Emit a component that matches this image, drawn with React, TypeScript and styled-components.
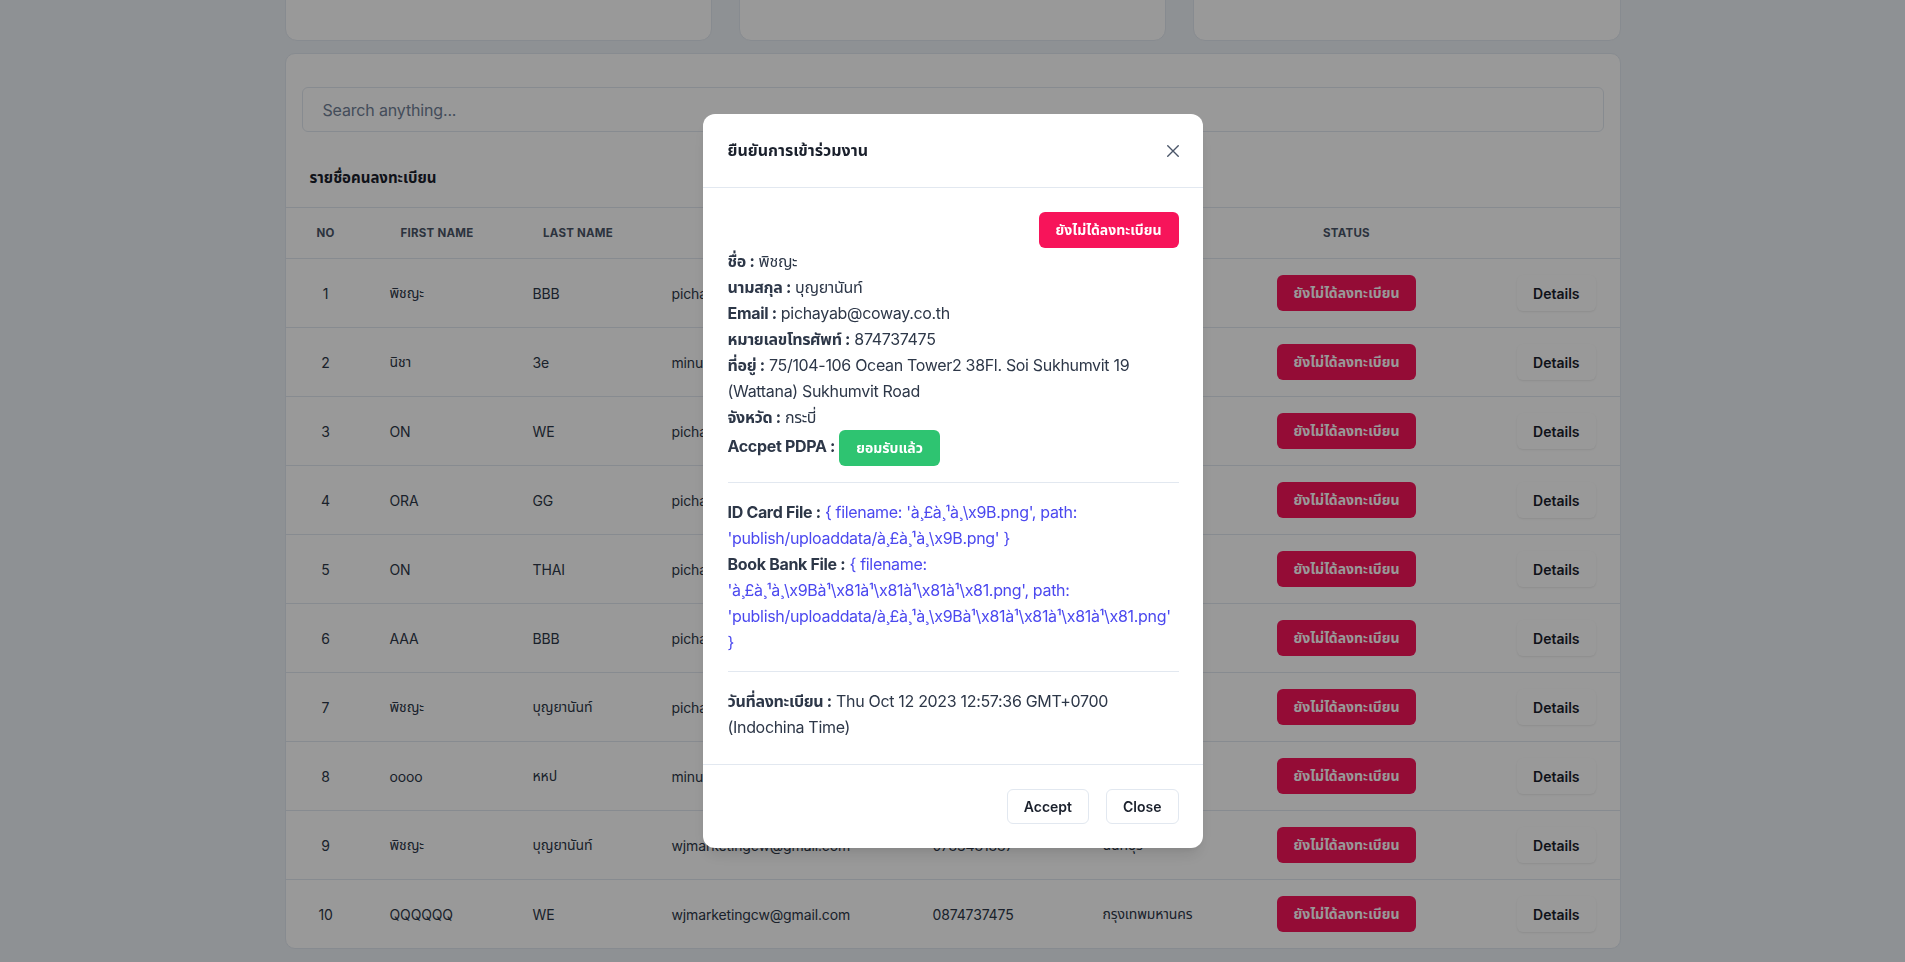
import React from 'react';
import styled, { createGlobalStyle } from 'styled-components';

const GlobalStyle = createGlobalStyle`
  * { box-sizing: border-box; }
  html, body {
    margin: 0;
    padding: 0;
    overflow: hidden;
  }
  body {
    background: #edf2f7;
    font-family: Inter, "Noto Sans", "Noto Sans Thai", "Tlwg Typo", "Loma", sans-serif;
    color: #2d3748;
  }
`;

const Page = styled.div`
  max-width: 1336px;
  margin: 0 auto;
`;

const Stats = styled.div`
  display: grid;
  grid-template-columns: repeat(3, 1fr);
  gap: 27px;
  margin-top: -100px;
`;

const StatCard = styled.div`
  height: 141px;
  background: #fff;
  border: 1px solid #e2e8f0;
  border-radius: 12px;
`;

const Panel = styled.section`
  margin-top: 12px;
  background: #fff;
  border: 1px solid #e2e8f0;
  border-radius: 10px;
  overflow: hidden;
`;

const SearchBar = styled.div`
  padding: 33px 16px 0 16px;
`;

const SearchInput = styled.input`
  width: 100%;
  height: 45px;
  padding: 0 20px;
  border: 1px solid #e2e8f0;
  border-radius: 6px;
  font: inherit;
  font-size: 16px;
  letter-spacing: -0.01em;
  color: #2d3748;
  outline: none;

  &::placeholder {
    color: #718096;
  }
`;

const PanelTitle = styled.h2`
  margin: 0;
  padding: 34px 24px 17px;
  font-size: 15px;
  font-weight: 700;
  line-height: 24px;
  color: #1a202c;
`;

const COLS = '80px 143px 139px 261px 170px 172px 192px 1fr';

const HeadRow = styled.div`
  display: grid;
  grid-template-columns: ${COLS};
  height: 52px;
  border-top: 1px solid #e2e8f0;
  border-bottom: 1px solid #e2e8f0;
`;

const HeadCell = styled.div`
  display: flex;
  align-items: center;
  justify-content: center;
  font-size: 11.5px;
  font-weight: 700;
  letter-spacing: 0.02em;
  text-transform: uppercase;
  color: #4a5568;
`;

const Row = styled.div`
  display: grid;
  grid-template-columns: ${COLS};
  height: 69px;
  border-bottom: 1px solid #e2e8f0;

  &:last-child {
    height: 68px;
    border-bottom: none;
  }
`;

const Cell = styled.div<{ $align?: 'left' | 'center' | 'right' }>`
  display: flex;
  align-items: center;
  justify-content: ${(p) => (p.$align === 'center' ? 'center' : p.$align === 'right' ? 'flex-end' : 'flex-start')};
  padding: 0 24px;
  font-size: 14px;
  letter-spacing: -0.01em;
  color: #2d3748;
  white-space: nowrap;
  overflow: hidden;
`;

const StatusButton = styled.button<{ $tone?: 'danger' | 'success' }>`
  display: inline-flex;
  align-items: center;
  justify-content: center;
  height: 36px;
  padding: 0 17px;
  border: none;
  border-radius: 6px;
  background: ${(p) => (p.$tone === 'success' ? '#2ec471' : '#f7145a')};
  color: #fff;
  font: inherit;
  font-size: 14px;
  font-weight: 700;
  letter-spacing: 0;
  vertical-align: middle;
  white-space: nowrap;
`;

const GhostButton = styled.button`
  height: 36px;
  padding: 0 16px;
  border: none;
  border-radius: 6px;
  background: #fff;
  box-shadow: 0 1px 2px rgba(0, 0, 0, 0.08);
  font: inherit;
  font-size: 14px;
  font-weight: 600;
  color: #1a202c;
`;

const Overlay = styled.div`
  position: fixed;
  inset: 0;
  background: rgba(0, 0, 0, 0.4);
  display: flex;
  align-items: center;
  justify-content: center;
`;

const Modal = styled.div`
  width: 500px;
  background: #fff;
  border-radius: 12px;
  box-shadow: 0 10px 15px -3px rgba(0, 0, 0, 0.1), 0 4px 6px -2px rgba(0, 0, 0, 0.05);
`;

const ModalHeader = styled.header`
  display: flex;
  align-items: center;
  justify-content: space-between;
  padding: 24px 24px 24px 25px;
  border-bottom: 1px solid #e2e8f0;
`;

const ModalTitle = styled.h3`
  margin: 0;
  font-size: 16px;
  font-weight: 700;
  line-height: 25px;
  color: #1a202c;
`;

const CloseIcon = styled.button`
  display: flex;
  align-items: center;
  justify-content: center;
  width: 24px;
  height: 24px;
  margin-right: -6px;
  padding: 0;
  border: none;
  background: none;
  color: #4a5568;
`;

const ModalBody = styled.div`
  padding: 24px 24px 24px 25px;
  font-size: 16px;
  line-height: 26px;
  letter-spacing: -0.02em;
`;

const StatusRow = styled.div`
  display: flex;
  justify-content: flex-end;
`;

const Line = styled.div`
  color: #2d3748;
`;

const Label = styled.b`
  font-weight: 700;
`;

const FileText = styled.span`
  color: #4b48ef;
`;

const NoWrap = styled.span`
  white-space: nowrap;
`;

const Divider = styled.hr`
  margin: 16px 0;
  border: none;
  border-top: 1px solid #e2e8f0;
`;

const ModalFooter = styled.footer`
  display: flex;
  justify-content: flex-end;
  gap: 17px;
  padding: 24px;
  border-top: 1px solid #e2e8f0;
`;

const OutlineButton = styled.button`
  height: 35px;
  padding: 0 16px;
  border: 1px solid #e2e8f0;
  border-radius: 6px;
  background: #fff;
  font: inherit;
  font-size: 14px;
  font-weight: 600;
  color: #1a202c;
`;

type Person = {
  first: string;
  last: string;
  email: string;
  phone: string;
  province: string;
};

const people: Person[] = [
  { first: 'พิชญะ', last: 'BBB', email: 'pichayab@coway.co.th', phone: '0874737475', province: 'กรุงเทพมหานคร' },
  { first: 'นิชา', last: '3e', email: 'minux.n@gmail.com', phone: '0812345678', province: 'ชลบุรี' },
  { first: 'ON', last: 'WE', email: 'pichayab@coway.co.th', phone: '0874737475', province: 'กรุงเทพมหานคร' },
  { first: 'ORA', last: 'GG', email: 'pichayab@coway.co.th', phone: '0874737475', province: 'กระบี่' },
  { first: 'ON', last: 'THAI', email: 'pichayab@coway.co.th', phone: '0874737475', province: 'กรุงเทพมหานคร' },
  { first: 'AAA', last: 'BBB', email: 'pichayab@coway.co.th', phone: '0874737475', province: 'กระบี่' },
  { first: 'พิชญะ', last: 'บุญยานันท์', email: 'pichayab@coway.co.th', phone: '0874737475', province: 'กรุงเทพมหานคร' },
  { first: 'oooo', last: 'หหป', email: 'minux.n@gmail.com', phone: '0812345678', province: 'นนทบุรี' },
  { first: 'พิชญะ', last: 'บุญยานันท์', email: 'wjmarketingcw@gmail.com', phone: '0783481887', province: 'นนทบุรี' },
  { first: 'QQQQQQ', last: 'WE', email: 'wjmarketingcw@gmail.com', phone: '0874737475', province: 'กรุงเทพมหานคร' },
];

const idCardName = 'à¸£à¸¹à¸\\x9B.png';
const bookBankName = 'à¸£à¸¹à¸\\x9Bà¹\\x81à¹\\x81à¹\\x81à¹\\x81.png';

const FileInfo = ({ name }: { name: string }) => (
  <FileText>
    {`{ filename: '${name}', path: `}
    <NoWrap>{`'publish/uploaddata/${name}'`}</NoWrap>
    {' }'}
  </FileText>
);

export default function App() {
  return (
    <>
      <GlobalStyle />
      <Page>
        <Stats>
          <StatCard />
          <StatCard />
          <StatCard />
        </Stats>

        <Panel>
          <SearchBar>
            <SearchInput placeholder="Search anything..." />
          </SearchBar>
          <PanelTitle>รายชื่อคนลงทะเบียน</PanelTitle>

          <HeadRow>
            <HeadCell>No</HeadCell>
            <HeadCell>First name</HeadCell>
            <HeadCell>Last name</HeadCell>
            <HeadCell>Email</HeadCell>
            <HeadCell>Phone</HeadCell>
            <HeadCell>Province</HeadCell>
            <HeadCell>Status</HeadCell>
            <HeadCell />
          </HeadRow>

          {people.map((p, i) => (
            <Row key={i}>
              <Cell $align="center">{i + 1}</Cell>
              <Cell>{p.first}</Cell>
              <Cell>{p.last}</Cell>
              <Cell>{p.email}</Cell>
              <Cell>{p.phone}</Cell>
              <Cell>{p.province}</Cell>
              <Cell $align="center">
                <StatusButton>ยังไม่ได้ลงทะเบียน</StatusButton>
              </Cell>
              <Cell $align="right">
                <GhostButton>Details</GhostButton>
              </Cell>
            </Row>
          ))}
        </Panel>
      </Page>

      <Overlay>
        <Modal>
          <ModalHeader>
            <ModalTitle>ยืนยันการเข้าร่วมงาน</ModalTitle>
            <CloseIcon aria-label="close">
              <svg width="12" height="12" viewBox="0 0 12 12" fill="none">
                <path d="M0.75 0.75l10.5 10.5M11.25 0.75L0.75 11.25" stroke="currentColor" strokeWidth="1.4" strokeLinecap="round" />
              </svg>
            </CloseIcon>
          </ModalHeader>

          <ModalBody>
            <StatusRow>
              <StatusButton>ยังไม่ได้ลงทะเบียน</StatusButton>
            </StatusRow>
            <Line><Label>ชื่อ :</Label> พิชญะ</Line>
            <Line><Label>นามสกุล :</Label> บุญยานันท์</Line>
            <Line><Label>Email :</Label> pichayab@coway.co.th</Line>
            <Line><Label>หมายเลขโทรศัพท์ :</Label> 874737475</Line>
            <Line><Label>ที่อยู่ :</Label> 75/104-106 Ocean Tower2 38Fl. Soi Sukhumvit 19 (Wattana) Sukhumvit Road</Line>
            <Line><Label>จังหวัด :</Label> กระบี่</Line>
            <Line>
              <Label>Accpet PDPA :</Label> <StatusButton $tone="success">ยอมรับแล้ว</StatusButton>
            </Line>

            <Divider />

            <Line><Label>ID Card File :</Label> <FileInfo name={idCardName} /></Line>
            <Line><Label>Book Bank File :</Label> <FileInfo name={bookBankName} /></Line>

            <Divider />

            <Line><Label>วันที่ลงทะเบียน :</Label> Thu Oct 12 2023 12:57:36 GMT+0700 (Indochina Time)</Line>
          </ModalBody>

          <ModalFooter>
            <OutlineButton>Accept</OutlineButton>
            <OutlineButton>Close</OutlineButton>
          </ModalFooter>
        </Modal>
      </Overlay>
    </>
  );
}
